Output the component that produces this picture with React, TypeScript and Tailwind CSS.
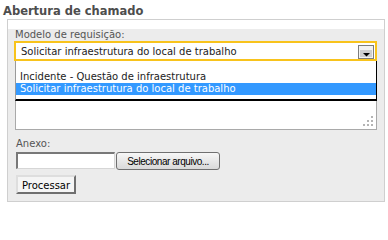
import React from 'react';

const options = [
  { label: 'Incidente - Questão de infraestrutura', selected: false },
  { label: 'Solicitar infraestrutura do local de trabalho', selected: true },
];

function ArrowButton() {
  return (
    <svg width="16" height="14" viewBox="0 0 16 14" className="block">
      <rect x="0.5" y="0.5" width="15" height="13" fill="#f2f2f2" stroke="#7d7d7d" />
      <rect x="2" y="5" width="12" height="7" fill="#cfcfcf" />
      <polygon points="5,8 12,8 8.5,11.5" fill="#000" />
    </svg>
  );
}

function ResizeGrip() {
  const dots = [
    [8, 0],
    [4, 4],
    [8, 4],
    [0, 8],
    [4, 8],
    [8, 8],
  ];
  return (
    <svg width="10" height="10" viewBox="0 0 10 10" className="absolute right-[3px] bottom-[3px]">
      {dots.map(([x, y], i) => (
        <rect key={i} x={x} y={y} width="2" height="2" fill="#b4b4b4" />
      ))}
    </svg>
  );
}

export default function App() {
  return (
    <div className="w-[388px] h-[205px] bg-white overflow-hidden font-['DejaVu_Sans',sans-serif]">
      {/* Title */}
      <div className="h-[19px] pt-[4px] pl-[3px] text-[11.5px] leading-[14px] font-bold text-[#4d4d4d]">
        Abertura de chamado
      </div>

      {/* Panel */}
      <div className="ml-[7px] w-[378px] h-[183px] border border-[#cfcfcf] bg-[#ececec]">
        <div className="h-[9px] bg-white" />
        <div className="pl-[6px]">
          <div className="h-[12px] pl-[1px] text-[10px] leading-[12px] text-[#555]">Modelo de requisição:</div>

          <div className="relative">
            {/* Select */}
            <div className="w-[363px] h-[20px] border-2 border-[#f8c31c] bg-white flex justify-between">
              <span className="pl-[5px] pt-[1px] text-[10px] leading-[16px] text-[#222]">
                Solicitar infraestrutura do local de trabalho
              </span>
              <div className="self-end mr-[1px]">
                <ArrowButton />
              </div>
            </div>

            {/* Textarea */}
            <div className="relative ml-[1px] mt-[1px] w-[362px] h-[68px] border border-[#a9a9a9] bg-white">
              <ResizeGrip />
            </div>

            {/* Open option list */}
            <div className="absolute top-[20px] left-[1px] w-[362px] h-[40px] bg-white border-l border-l-[#9a9a9a] border-r border-r-black border-b-2 border-b-black pt-[10px]">
              {options.map((o) => (
                <div
                  key={o.label}
                  className={
                    o.selected
                      ? 'h-[12px] pl-[4px] text-[10px] leading-[12px] bg-[#3399ff] text-white'
                      : 'h-[12px] pl-[4px] text-[10px] leading-[12px] text-[#222]'
                  }
                >
                  {o.label}
                </div>
              ))}
            </div>
          </div>

          {/* Attachment */}
          <div className="mt-[8px] ml-[2px] h-[12px] text-[10px] leading-[12px] text-[#555]">Anexo:</div>
          <div className="mt-[2px] ml-[2px] flex items-start gap-[1px]">
            <div className="w-[99px] h-[17px] bg-white border-t-2 border-l-2 border-r border-b border-t-[#787878] border-l-[#787878] border-r-[#d6d6d6] border-b-[#d6d6d6]" />
            <button className="w-[104px] h-[18px] rounded-[3px] border border-[#707070] bg-gradient-to-b from-[#f7f7f7] to-[#d9d9d9] pt-[2px] text-center font-['Liberation_Sans',Arial,sans-serif] text-[10px] leading-[14px] tracking-[-0.45px] text-black">
              Selecionar arquivo...
            </button>
          </div>

          <button className="block mt-[5px] ml-[2px] w-[60px] h-[19px] border-2 border-t-[#dedede] border-l-[#dedede] border-r-[#6f6f6f] border-b-[#6f6f6f] bg-[#f5f5f5] pt-[2px] text-center text-[10px] leading-[13px] text-black">
            Processar
          </button>
        </div>
      </div>
    </div>
  );
}
